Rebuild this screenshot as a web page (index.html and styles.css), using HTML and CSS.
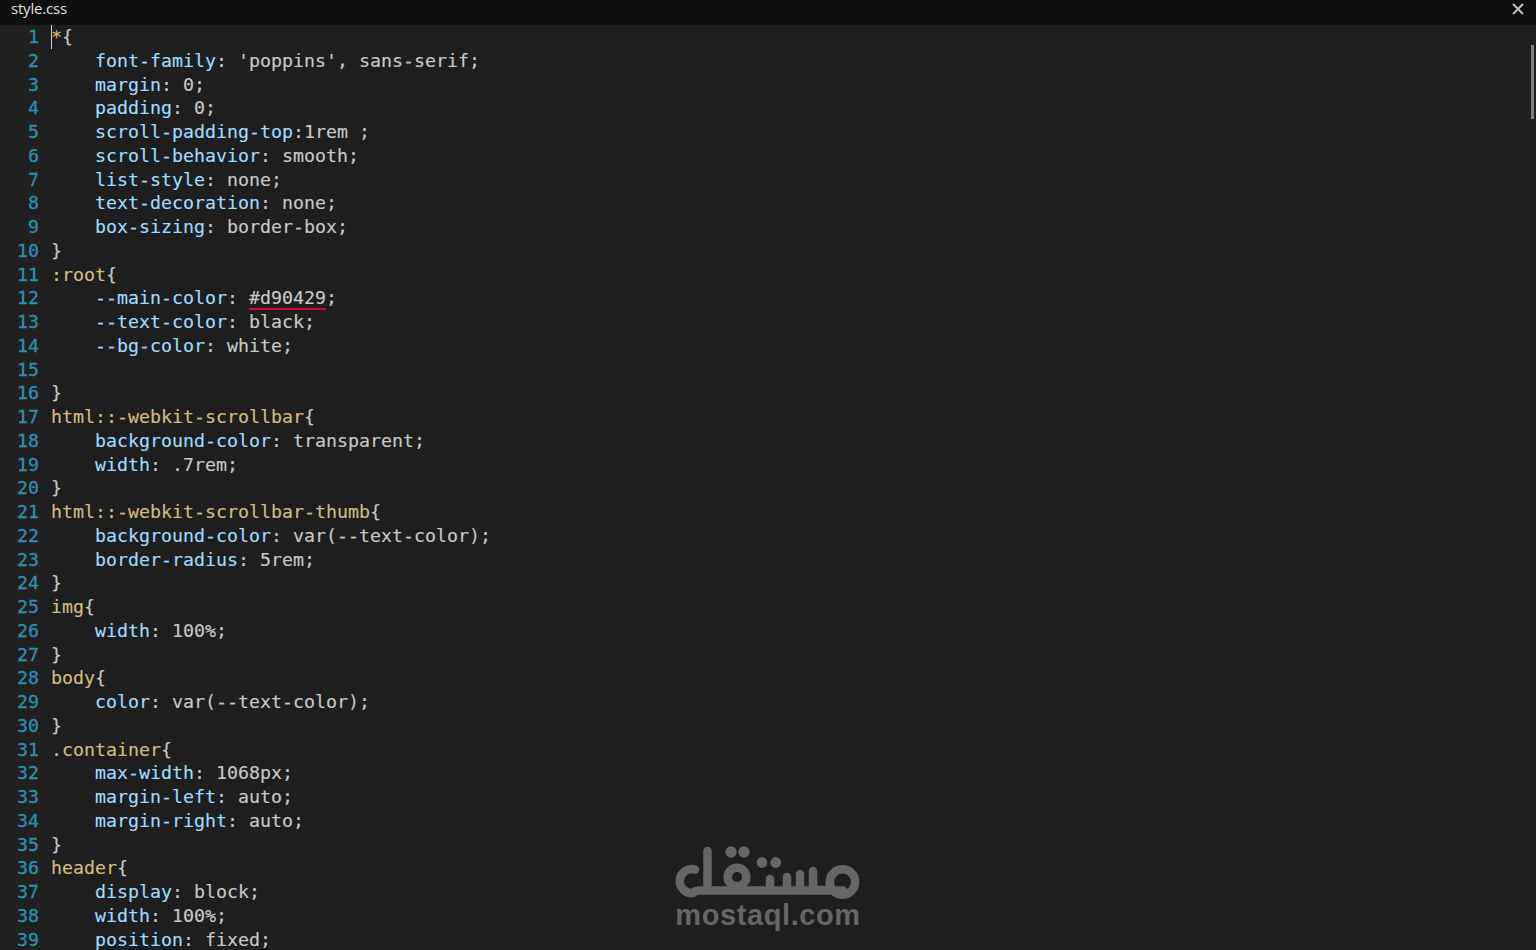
FILE: index.html
```html
<!DOCTYPE html>
<html lang="en">
<head>
<meta charset="utf-8">
<title>style.css</title>
<link rel="stylesheet" href="styles.css">
</head>
<body>
<div class="window">
  <header class="titlebar">
    <span class="tab">style.css</span>
    <svg class="close" viewBox="0 0 12 12" width="12" height="12"><path d="M1 1 L11 11 M11 1 L1 11"/></svg>
  </header>
  <main class="editor">
    <ol class="gutter" id="gutter"></ol>
    <div class="code">
<div class="ln"><span class="caret"></span><span class="s">*</span>{</div>
<div class="ln">    <span class="p">font-family</span>: 'poppins', sans-serif;</div>
<div class="ln">    <span class="p">margin</span>: 0;</div>
<div class="ln">    <span class="p">padding</span>: 0;</div>
<div class="ln">    <span class="p">scroll-padding-top</span>:1rem ;</div>
<div class="ln">    <span class="p">scroll-behavior</span>: smooth;</div>
<div class="ln">    <span class="p">list-style</span>: none;</div>
<div class="ln">    <span class="p">text-decoration</span>: none;</div>
<div class="ln">    <span class="p">box-sizing</span>: border-box;</div>
<div class="ln">}</div>
<div class="ln"><span class="s">:root</span>{</div>
<div class="ln">    <span class="p">--main-color</span>: <span class="err">#d90429</span>;</div>
<div class="ln">    <span class="p">--text-color</span>: black;</div>
<div class="ln">    <span class="p">--bg-color</span>: white;</div>
<div class="ln"> </div>
<div class="ln">}</div>
<div class="ln"><span class="s">html::-webkit-scrollbar</span>{</div>
<div class="ln">    <span class="p">background-color</span>: transparent;</div>
<div class="ln">    <span class="p">width</span>: .7rem;</div>
<div class="ln">}</div>
<div class="ln"><span class="s">html::-webkit-scrollbar-thumb</span>{</div>
<div class="ln">    <span class="p">background-color</span>: var(--text-color);</div>
<div class="ln">    <span class="p">border-radius</span>: 5rem;</div>
<div class="ln">}</div>
<div class="ln"><span class="s">img</span>{</div>
<div class="ln">    <span class="p">width</span>: 100%;</div>
<div class="ln">}</div>
<div class="ln"><span class="s">body</span>{</div>
<div class="ln">    <span class="p">color</span>: var(--text-color);</div>
<div class="ln">}</div>
<div class="ln"><span class="s">.container</span>{</div>
<div class="ln">    <span class="p">max-width</span>: 1068px;</div>
<div class="ln">    <span class="p">margin-left</span>: auto;</div>
<div class="ln">    <span class="p">margin-right</span>: auto;</div>
<div class="ln">}</div>
<div class="ln"><span class="s">header</span>{</div>
<div class="ln">    <span class="p">display</span>: block;</div>
<div class="ln">    <span class="p">width</span>: 100%;</div>
<div class="ln">    <span class="p">position</span>: fixed;</div>
    </div>
    <div class="scroll-thumb"></div>
    <div class="watermark">
      <svg class="mark" viewBox="670 840 195 62" width="195" height="62" role="img" aria-label="mostaql logo">
        <g class="mark-stroke">
          <path d="M695 869.5 A12 12 0 1 0 693 893 Q695 890.5 700 890.5 H843"/>
          <path d="M707.5 851 V890"/>
          <circle cx="737" cy="877" r="9.3"/>
          <circle cx="842.5" cy="882" r="12.7"/>
          <path d="M770 879 V890 M787 877 V890 M800 874 V890 M813 871 V890"/>
          <path d="M813 890 H826 Q830 890 830 882"/>
        </g>
        <g class="mark-dots">
          <circle cx="731" cy="852" r="5.7"/><circle cx="744" cy="852" r="5.7"/>
          <circle cx="762" cy="862.5" r="5.4"/><circle cx="775.7" cy="862.5" r="5.4"/>
        </g>
      </svg>
      <span class="wordmark">mostaql.com</span>
    </div>
  </main>
</div>
<script src="gutter.js"></script>
</body>
</html>
```
FILE: gutter.js
```js
var g = document.getElementById('gutter');
for (var i = 1; i <= 39; i++) {
  var li = document.createElement('li');
  li.textContent = i;
  g.appendChild(li);
}
```
FILE: styles.css
```css
* { box-sizing: border-box; margin: 0; padding: 0; }
html, body { height: 100%; overflow: hidden; background: #1e1e1e; }
.window { display: flex; flex-direction: column; height: 950px; }
.titlebar {
  flex: 0 0 25px; display: flex; align-items: center; justify-content: space-between;
  padding: 0 12px 0 11px; background: #0f0f0f;
  font: 15px/18px "Open Sans", "Noto Sans", sans-serif; color: #e0e0e0;
}
.tab { position: relative; top: -5px; letter-spacing: -0.2px; }
.close { position: relative; top: -4px; fill: none; stroke: #bdbdbd; stroke-width: 2; }
.editor { position: relative; flex: 1; display: flex; overflow: hidden; background: #1e1e1e; }
.gutter {
  list-style: none; flex: 0 0 41px; padding: 0 2px 0 0; text-align: right; background: #202020;
  font: 18.27px/23.75px "DejaVu Sans Mono", monospace; color: #2b91af;
  -webkit-text-stroke: 0.3px #2b91af;
}
.gutter li { height: 23.75px; }
.code {
  padding-left: 10px; color: #c8c8c8;
  font: 18.27px/23.75px "DejaVu Sans Mono", monospace;
  -webkit-text-stroke: 0.15px;
}
.ln { height: 23.75px; position: relative; white-space: pre; }
.s { color: #d7ba7d; }
.p { color: #9cdcfe; }
.err { border-bottom: 2px solid #d6042f; }
.caret { position: absolute; left: 0; top: 0; width: 1px; height: 24px; background: #d0d0d0; }
.scroll-thumb { position: absolute; right: 2px; top: 20px; width: 3px; height: 74px; background: #7f7f7f; }
.watermark {
  position: absolute; left: 670px; top: 815px; width: 195px;
  display: flex; flex-direction: column; align-items: center; color: #666;
}
.mark { display: block; }
.mark-stroke { fill: none; stroke: #666; stroke-width: 8.5; stroke-linecap: round; stroke-linejoin: round; }
.mark-dots { fill: #666; }
.wordmark { font: bold 29px/26px "Liberation Sans", sans-serif; white-space: nowrap; letter-spacing: 0.6px; margin-left: 1px; }
```
